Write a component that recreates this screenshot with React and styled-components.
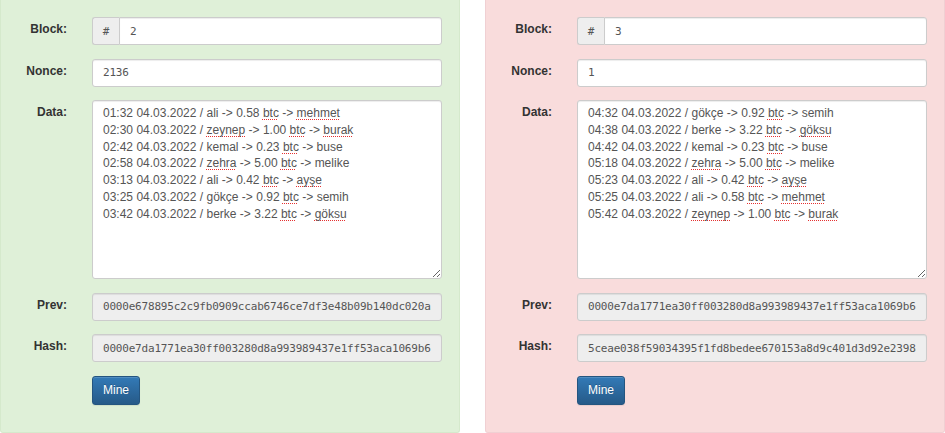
import React from 'react';
import styled, { createGlobalStyle } from 'styled-components';

const GlobalStyle = createGlobalStyle`
  html, body {
    margin: 0;
    padding: 0;
    background: #fff;
  }
  body {
    font-family: "Liberation Sans", Arial, sans-serif;
    font-size: 12px;
    color: #333;
  }
  * {
    box-sizing: border-box;
  }
`;

const Page = styled.div`
  display: flex;
  gap: 25px;
  height: 433px;
`;

const Well = styled.div`
  width: 460px;
  height: 100%;
  background: ${(p) => (p.$valid ? '#dff0d8' : '#f9dcdc')};
  border: 1px solid ${(p) => (p.$valid ? '#d5e9cc' : '#f0d0d3')};
  border-top: none;
  border-radius: 0 0 3px 3px;
  padding: 17px 16px 0 0;
  display: grid;
  grid-template-columns: 66px 350px;
  column-gap: 25px;
  row-gap: 13.5px;
  align-content: start;
`;

const Label = styled.label`
  text-align: right;
  font-weight: bold;
  font-size: 12px;
  line-height: 17px;
  padding-top: 4px;
  color: #333;
`;

const InputGroup = styled.div`
  display: flex;
`;

const Addon = styled.span`
  width: 27px;
  height: 28px;
  display: flex;
  align-items: center;
  justify-content: center;
  background: #eee;
  border: 1px solid #ccc;
  border-right: none;
  border-radius: 3px 0 0 3px;
  color: #555;
  font-family: "DejaVu Sans Mono", monospace;
  font-size: 11px;
`;

const Input = styled.input`
  flex: 1;
  width: 100%;
  min-width: 0;
  height: 28px;
  padding: 0 10px;
  border: 1px solid #ccc;
  border-radius: ${(p) => (p.$grouped ? '0 3px 3px 0' : '3px')};
  background: ${(p) => (p.readOnly ? '#eee' : '#fff')};
  box-shadow: inset 0 1px 1px rgba(0, 0, 0, 0.075);
  color: #555;
  font-family: "DejaVu Sans Mono", "Liberation Mono", monospace;
  font-size: 11px;
  letter-spacing: -0.2px;
  outline: none;
`;

const DataBox = styled.div`
  height: 179px;
  padding: 4px 10px;
  background: #fff;
  border: 1px solid #ccc;
  border-radius: 3px;
  box-shadow: inset 0 1px 1px rgba(0, 0, 0, 0.075);
  color: #555;
  font-family: "Liberation Sans", Arial, sans-serif;
  font-size: 12px;
  line-height: 16.8px;
  overflow: auto;
  resize: vertical;
`;

const Line = styled.div`
  white-space: pre;
`;

/* red spell-check marker under the word */
const Misspelled = styled.span`
  text-decoration: underline dotted #e53030;
  text-decoration-thickness: 1px;
  text-underline-offset: 2px;
  text-decoration-skip-ink: none;
`;

const MineButton = styled.button`
  justify-self: start;
  height: 29px;
  padding: 0 10px;
  border: 1px solid #245580;
  border-radius: 3px;
  background: linear-gradient(#337ab7, #265a88);
  box-shadow: inset 0 1px 0 rgba(255, 255, 255, 0.15), 0 1px 1px rgba(0, 0, 0, 0.075);
  color: #fff;
  text-shadow: 0 -1px 0 rgba(0, 0, 0, 0.2);
  font-family: "Liberation Sans", Arial, sans-serif;
  font-size: 12px;
  cursor: pointer;
`;

const flagged = new Set(['btc', 'mehmet', 'zeynep', 'burak', 'zehra', 'ayşe', 'göksu']);

function DataLine({ text }) {
  const parts = text.split(/(\s+)/);
  return (
    <Line>
      {parts.map((w, i) =>
        flagged.has(w) ? <Misspelled key={i}>{w}</Misspelled> : w
      )}
    </Line>
  );
}

const blocks = [
  {
    valid: true,
    number: '2',
    nonce: '2136',
    data: [
      '01:32 04.03.2022 / ali -> 0.58 btc -> mehmet',
      '02:30 04.03.2022 / zeynep -> 1.00 btc -> burak',
      '02:42 04.03.2022 / kemal -> 0.23 btc -> buse',
      '02:58 04.03.2022 / zehra -> 5.00 btc -> melike',
      '03:13 04.03.2022 / ali -> 0.42 btc -> ayşe',
      '03:25 04.03.2022 / gökçe -> 0.92 btc -> semih',
      '03:42 04.03.2022 / berke -> 3.22 btc -> göksu',
    ],
    prev: '0000e678895c2c9fb0909ccab6746ce7df3e48b09b140dc020a3b7c91d2e5f08',
    hash: '0000e7da1771ea30ff003280d8a993989437e1ff53aca1069b6c2f48d1e7a91',
  },
  {
    valid: false,
    number: '3',
    nonce: '1',
    data: [
      '04:32 04.03.2022 / gökçe -> 0.92 btc -> semih',
      '04:38 04.03.2022 / berke -> 3.22 btc -> göksu',
      '04:42 04.03.2022 / kemal -> 0.23 btc -> buse',
      '05:18 04.03.2022 / zehra -> 5.00 btc -> melike',
      '05:23 04.03.2022 / ali -> 0.42 btc -> ayşe',
      '05:25 04.03.2022 / ali -> 0.58 btc -> mehmet',
      '05:42 04.03.2022 / zeynep -> 1.00 btc -> burak',
    ],
    prev: '0000e7da1771ea30ff003280d8a993989437e1ff53aca1069b6c2f48d1e7a91',
    hash: '5ceae038f59034395f1fd8bedee670153a8d9c401d3d92e2398a7f0c41b6e2d',
  },
];

function Block({ block }) {
  return (
    <Well $valid={block.valid}>
      <Label>Block:</Label>
      <InputGroup>
        <Addon>#</Addon>
        <Input $grouped defaultValue={block.number} />
      </InputGroup>

      <Label>Nonce:</Label>
      <Input defaultValue={block.nonce} />

      <Label>Data:</Label>
      <DataBox>
        {block.data.map((l) => (
          <DataLine key={l} text={l} />
        ))}
      </DataBox>

      <Label>Prev:</Label>
      <Input readOnly value={block.prev} />

      <Label>Hash:</Label>
      <Input readOnly value={block.hash} />

      <span />
      <MineButton>Mine</MineButton>
    </Well>
  );
}

export default function App() {
  return (
    <>
      <GlobalStyle />
      <Page>
        {blocks.map((b) => (
          <Block key={b.number} block={b} />
        ))}
      </Page>
    </>
  );
}
